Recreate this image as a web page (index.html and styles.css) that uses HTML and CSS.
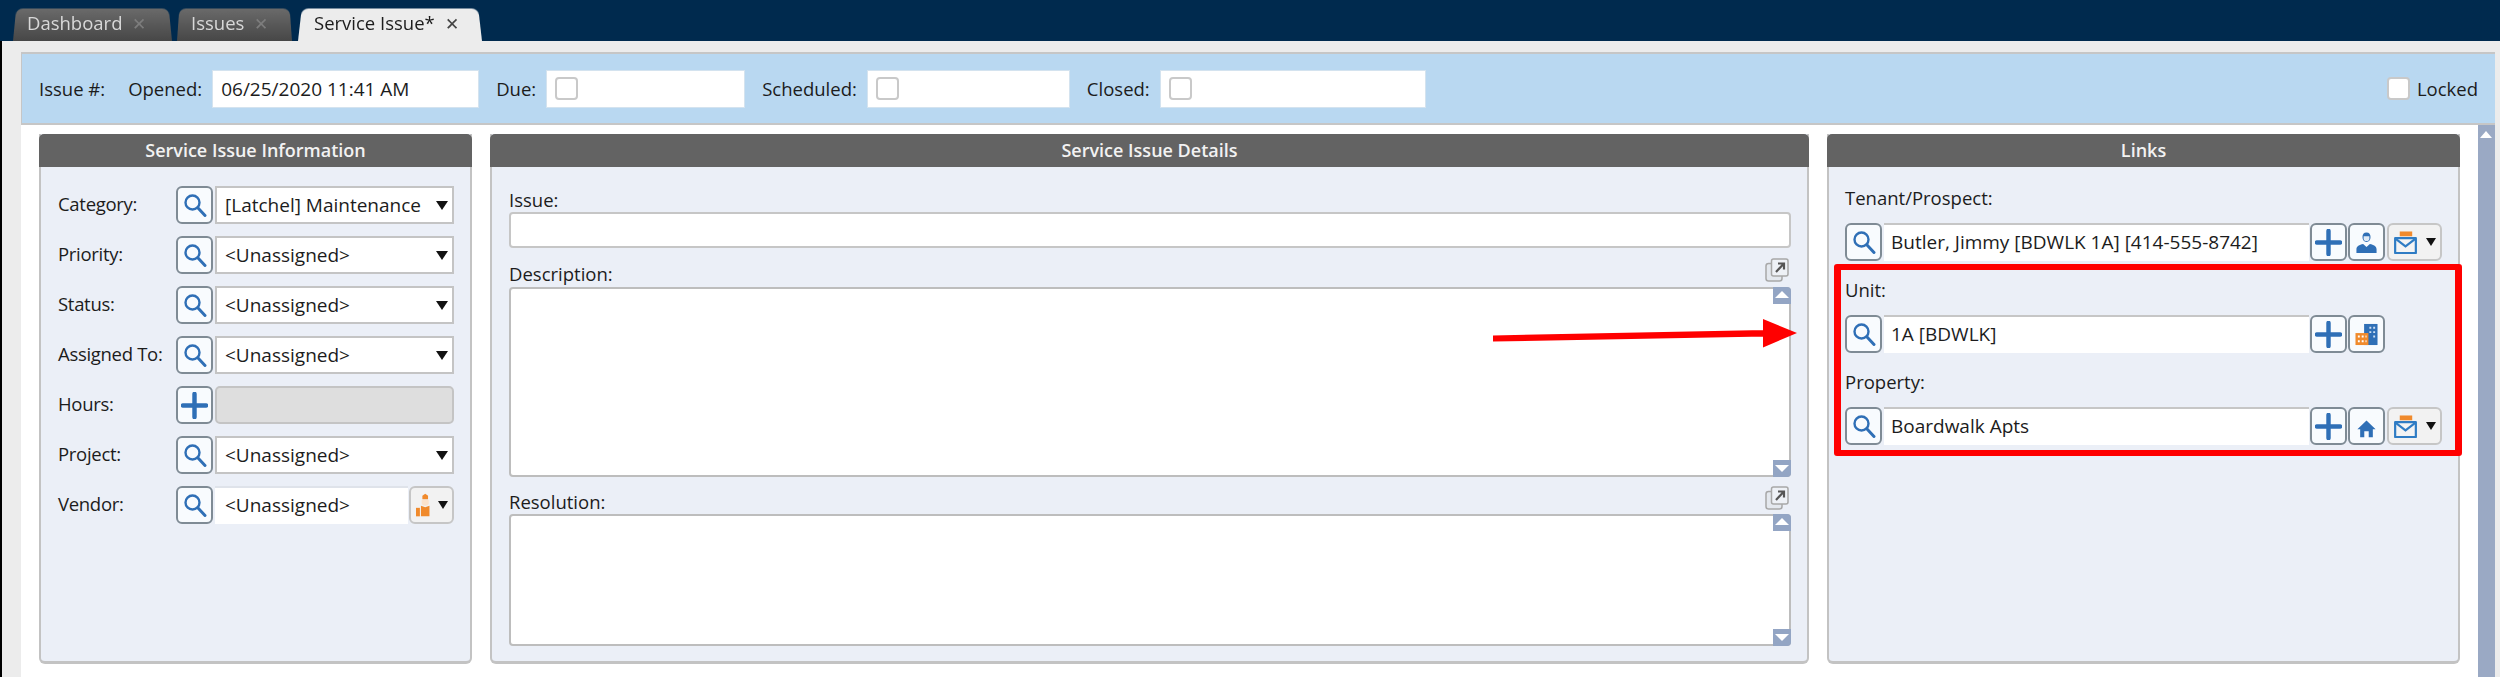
FILE: index.html
```html
<!DOCTYPE html>
<html lang="en">
<head>
    <meta charset="UTF-8">
    <title>Service Issue</title>
    <link rel="stylesheet" href="styles.css">
</head>
<body>
    <svg class="sprite" xmlns="http://www.w3.org/2000/svg">
        <symbol id="i-search" viewBox="0 0 24 24">
            <circle cx="9.5" cy="9.5" r="7" fill="none" stroke="#2f6fb6" stroke-width="2.4"/>
            <path d="M14.8 14.8 L22 22.5" fill="none" stroke="#2f6fb6" stroke-width="3" stroke-linecap="round"/>
        </symbol>
        <symbol id="i-plus" viewBox="0 0 28 28">
            <path d="M14 2 V26 M2 14 H26" fill="none" stroke="#2f6fb6" stroke-width="4.6" stroke-linecap="round"/>
        </symbol>
        <symbol id="i-person" viewBox="0 0 24 24">
            <path d="M12 1.5 c3 0 4.2 2.2 4.2 4.8 c0 2.8-1.4 5.2-4.2 5.2 s-4.2-2.4-4.2-5.2 c0-2.6 1.2-4.8 4.2-4.8 z" fill="#2f6fb6"/>
            <path d="M1.5 23 v-4 c0-3 3-4.600 7-5.400 l3.500 3 l3.500-3 c4 .8 7 2.400 7 5.400 v4 z" fill="#2f6fb6"/>
            <path d="M9 5.500 h6 v2.500 c0 1.500-1.300 2.500-3 2.500 s-3-1-3-2.500 z" fill="#dfeaf6"/>
        </symbol>
        <symbol id="i-mail" viewBox="0 0 24 24">
            <path d="M6 0.500 h13 v5 h-13 z" fill="#f08a2c"/>
            <path d="M1.200 7.500 H22.800 V23 H1.200 z" fill="#f4f4f4" stroke="#2f7cc4" stroke-width="2.300" stroke-linejoin="round"/>
            <path d="M1.500 8 L12 16 L22.500 8" fill="none" stroke="#2f7cc4" stroke-width="2.300"/>
        </symbol>
        <symbol id="i-building" viewBox="0 0 24 24">
            <path d="M9.500 1 H23.500 V23 H9.500 z" fill="#2f6fb6"/>
            <path d="M0.500 10.500 H14 V23 H0.500 z" fill="#f08a2c"/>
            <path d="M3 13 h2 v2 h-2 z M7 13 h2 v2 h-2 z M3 18 h2 v2 h-2 z M7 18 h2 v2 h-2 z M11 13 h1 v2 h-1 z M11 18 h1 v2 h-1 z" fill="#fff"/>
            <path d="M15 4 h2 v2 h-2 z M19 4 h2 v2 h-2 z M15 8.500 h2 v2 h-2 z M19 8.500 h2 v2 h-2 z M19 13 h2 v2 h-2 z" fill="#cfe0f2"/>
        </symbol>
        <symbol id="i-home" viewBox="0 0 24 24">
            <path d="M12 2 L23.500 13 H20 V23 H14.800 V15.500 H9.200 V23 H4 V13 H0.500 z" fill="#2f6fb6"/>
        </symbol>
        <symbol id="i-worker" viewBox="0 0 24 32">
            <path d="M13 0 l4 3 v5 h-8 v-5 z" fill="#f08a2c"/>
            <path d="M8 9 h10 v5 c0 2-2 3-5 3 s-5-1-5-3 z" fill="#fbe3cd"/>
            <path d="M7 17 l6 2 l6-2 v15 h-12 z" fill="#f08a2c"/>
            <path d="M0 20 h5.500 v12 h-5.500 z" fill="#f08a2c"/>
        </symbol>
        <symbol id="i-popout" viewBox="0 0 24 24">
            <rect x="1" y="5.500" width="16" height="17.500" rx="2.500" fill="#e4e8ee" stroke="#a8a8a8" stroke-width="1.500"/>
            <rect x="6.500" y="1" width="16.500" height="17" rx="2" fill="#eef1f6" stroke="#a8a8a8" stroke-width="1.500"/>
            <path d="M11 14 L18 6.500 M13 5.500 H19 V11.500" fill="none" stroke="#555" stroke-width="2.200"/>
        </symbol>
    </svg>

    <div class="tabbar">
        <div class="tab">Dashboard <span class="tab-x">&#10005;</span></div>
        <div class="tab tab-issues">Issues <span class="tab-x">&#10005;</span></div>
        <div class="tab tab-active">Service Issue* <span class="tab-x">&#10005;</span></div>
    </div>

    <div class="content">
        <div class="page">
            <div class="issuebar">
                <span class="bar-label issue-no">Issue #:</span>
                <span class="bar-label">Opened:</span>
                <div class="bar-input w-opened">06/25/2020 11:41 AM</div>
                <span class="bar-label">Due:</span>
                <div class="bar-input w-due"><span class="check"></span></div>
                <span class="bar-label">Scheduled:</span>
                <div class="bar-input w-sched"><span class="check"></span></div>
                <span class="bar-label">Closed:</span>
                <div class="bar-input w-closed"><span class="check"></span></div>
                <div class="locked"><span class="check"></span> Locked</div>
            </div>

            <div class="main">
                <div class="panels">
                    <section class="panel panel-info">
                        <h2 class="panel-head">Service Issue Information</h2>
                        <div class="info-rows">
                            <div class="info-row">
                                <span class="info-label">Category:</span>
                                <button class="btn"><svg class="ic-search"><use href="#i-search"/></svg></button>
                                <div class="select">[Latchel] Maintenance<i class="caret"></i></div>
                            </div>
                            <div class="info-row">
                                <span class="info-label">Priority:</span>
                                <button class="btn"><svg class="ic-search"><use href="#i-search"/></svg></button>
                                <div class="select">&lt;Unassigned&gt;<i class="caret"></i></div>
                            </div>
                            <div class="info-row">
                                <span class="info-label">Status:</span>
                                <button class="btn"><svg class="ic-search"><use href="#i-search"/></svg></button>
                                <div class="select">&lt;Unassigned&gt;<i class="caret"></i></div>
                            </div>
                            <div class="info-row">
                                <span class="info-label">Assigned To:</span>
                                <button class="btn"><svg class="ic-search"><use href="#i-search"/></svg></button>
                                <div class="select">&lt;Unassigned&gt;<i class="caret"></i></div>
                            </div>
                            <div class="info-row">
                                <span class="info-label">Hours:</span>
                                <button class="btn"><svg class="ic-plus"><use href="#i-plus"/></svg></button>
                                <div class="select select-off"></div>
                            </div>
                            <div class="info-row">
                                <span class="info-label">Project:</span>
                                <button class="btn"><svg class="ic-search"><use href="#i-search"/></svg></button>
                                <div class="select">&lt;Unassigned&gt;<i class="caret"></i></div>
                            </div>
                            <div class="info-row">
                                <span class="info-label">Vendor:</span>
                                <button class="btn"><svg class="ic-search"><use href="#i-search"/></svg></button>
                                <div class="select select-vendor">&lt;Unassigned&gt;</div>
                                <button class="btn btn-menu btn-vendor"><svg class="ic-worker"><use href="#i-worker"/></svg><i class="caret caret-small"></i></button>
                            </div>
                        </div>
                    </section>

                    <section class="panel panel-details">
                        <h2 class="panel-head">Service Issue Details</h2>
                        <div class="details">
                            <label class="field-label">Issue:</label>
                            <div class="text-input"></div>
                            <div class="note-head note-desc">
                                <label class="field-label">Description:</label>
                                <svg class="ic-popout"><use href="#i-popout"/></svg>
                            </div>
                            <div class="textarea ta-desc"><span class="sb-up"></span><span class="sb-down"></span></div>
                            <div class="note-head note-res">
                                <label class="field-label">Resolution:</label>
                                <svg class="ic-popout"><use href="#i-popout"/></svg>
                            </div>
                            <div class="textarea ta-res"><span class="sb-up"></span><span class="sb-down"></span></div>
                        </div>
                    </section>

                    <section class="panel panel-links">
                        <h2 class="panel-head">Links</h2>
                        <div class="links">
                            <div class="link-group">
                                <label class="field-label">Tenant/Prospect:</label>
                                <div class="link-row">
                                    <button class="btn"><svg class="ic-search"><use href="#i-search"/></svg></button>
                                    <div class="link-input">Butler, Jimmy [BDWLK 1A] [414-555-8742]</div>
                                    <button class="btn"><svg class="ic-plus"><use href="#i-plus"/></svg></button>
                                    <button class="btn"><svg class="ic-small"><use href="#i-person"/></svg></button>
                                    <button class="btn btn-menu"><svg class="ic-small"><use href="#i-mail"/></svg><i class="caret caret-small"></i></button>
                                </div>
                            </div>
                            <div class="link-group">
                                <label class="field-label">Unit:</label>
                                <div class="link-row">
                                    <button class="btn"><svg class="ic-search"><use href="#i-search"/></svg></button>
                                    <div class="link-input">1A [BDWLK]</div>
                                    <button class="btn"><svg class="ic-plus"><use href="#i-plus"/></svg></button>
                                    <button class="btn"><svg class="ic-small"><use href="#i-building"/></svg></button>
                                </div>
                            </div>
                            <div class="link-group">
                                <label class="field-label">Property:</label>
                                <div class="link-row">
                                    <button class="btn"><svg class="ic-search"><use href="#i-search"/></svg></button>
                                    <div class="link-input">Boardwalk Apts</div>
                                    <button class="btn"><svg class="ic-plus"><use href="#i-plus"/></svg></button>
                                    <button class="btn"><svg class="ic-home"><use href="#i-home"/></svg></button>
                                    <button class="btn btn-menu"><svg class="ic-small"><use href="#i-mail"/></svg><i class="caret caret-small"></i></button>
                                </div>
                            </div>
                        </div>
                        <div class="callout"></div>
                    </section>
                </div>
                <div class="page-scroll"><span class="page-scroll-up"></span></div>
            </div>
        </div>
    </div>

    <!-- red annotation arrow drawn on top of the screenshot -->
    <svg class="arrow" viewBox="0 0 306 30" xmlns="http://www.w3.org/2000/svg">
        <path d="M0 17.500 L272 12 V18.500 L0 23.500 z M270 1 L304 15 L270 29.500 z" fill="#f00"/>
    </svg>
</body>
</html>
```

FILE: styles.css
```css
* {
    box-sizing: border-box;
}
html, body {
    margin: 0;
    height: 677px;
    overflow: hidden;
}
body {
    position: relative;
    background-color: #000;
    padding-left: 2px;
    font-family: "Open Sans", "Noto Sans", sans-serif;
    font-size: 18.5px;
    color: #1c1c1c;
    display: flex;
    flex-direction: column;
}
.sprite {
    display: none;
}

/* tabs */
.tabbar {
    height: 41px;
    background-color: #002a4e;
    padding: 7px 0 0 13px;
    display: flex;
    margin-left: -2px;
    flex-shrink: 0;
}
.tab {
    position: relative;
    z-index: 0;
    width: 159px;
    padding-left: 14px;
    line-height: 32px;
    color: #d8d8d8;
    margin-right: 5px;
    white-space: nowrap;
}
.tab::before {
    content: "";
    position: absolute;
    inset: 0;
    z-index: -1;
    border-radius: 7px 7px 0 0;
    background: linear-gradient(#6a6a6a, #474747);
    transform: perspective(70px) rotateX(5deg);
    transform-origin: bottom;
}
.tab-issues {
    width: 115px;
    margin-right: 6px;
    padding-left: 14px;
}
.tab-active {
    width: 184px;
    padding-left: 16px;
    color: #1c1c1c;
}
.tab-active::before {
    background: #ececec;
}
.tab-x {
    font-size: 17px;
    margin-left: 5px;
    color: #7d7d7d;
}
.tab-active .tab-x {
    color: #444;
}

.content {
    flex: 1;
    background-color: #ececec;
    padding: 11px 5px 0 19px;
    min-height: 0;
}
.page {
    height: 100%;
    background-color: #fff;
    display: flex;
    flex-direction: column;
}

/* blue band on top */
.issuebar {
    height: 73px;
    background-color: #b9d8f1;
    border: 2px solid #c6c6c6;
    border-width: 2px 0 2px 1px;
    display: flex;
    align-items: center;
    padding-left: 17px;
    flex-shrink: 0;
}
.bar-label {
    white-space: nowrap;
}
.issue-no {
    margin-right: 23px;
}
.bar-input {
    height: 38px;
    background-color: #fff;
    border: 1px solid #d4e3ef;
    margin: 0 17px 0 10px;
    padding-left: 8px;
    display: flex;
    align-items: center;
    white-space: nowrap;
    font-size: 19px;
}
.w-opened {
    width: 267px;
}
.w-due {
    width: 199px;
}
.w-sched {
    width: 203px;
}
.w-closed {
    width: 266px;
}
.check {
    display: inline-block;
    width: 23px;
    height: 23px;
    background-color: #fff;
    border: 2px solid #c9c9c9;
    border-radius: 4px;
}
.locked {
    margin-left: auto;
    margin-right: 17px;
    display: flex;
    align-items: center;
    gap: 7px;
}

/* panels */
.main {
    flex: 1;
    display: flex;
    min-height: 0;
}
.panels {
    flex: 1;
    display: flex;
    gap: 18px;
    padding: 9px 18px 13px 18px;
}
.panel {
    position: relative;
    display: flex;
    flex-direction: column;
    background-color: #ebeff7;
    border: 2px solid #c3c3c3;
    border-top: 0;
    border-bottom-width: 3px;
    border-radius: 0 0 6px 6px;
}
.panel-info {
    width: 433px;
}
.panel-details {
    width: 1319px;
}
.panel-links {
    width: 633px;
}
.panel-head {
    margin: 0 -2px;
    height: 33px;
    line-height: 33px;
    background-color: #636363;
    border-radius: 5px 5px 0 0;
    color: #f2f2f2;
    font-size: 18px;
    font-weight: 600;
    text-align: center;
}

.info-rows {
    padding: 19px 16px 0 17px;
    display: flex;
    flex-direction: column;
    gap: 12px;
}
.info-row {
    display: flex;
    align-items: center;
    height: 38px;
}
.info-label {
    width: 118px;
    padding-bottom: 3px;
    white-space: nowrap;
    letter-spacing: -0.3px;
}
.btn {
    width: 37px;
    height: 38px;
    flex-shrink: 0;
    padding: 0;
    background-color: #f8fbfe;
    border: 2px solid #7f8b95;
    border-radius: 6px;
    display: flex;
    align-items: center;
    justify-content: center;
}
.btn-menu {
    width: 55px;
    margin-left: 2px;
    background-color: #f2f2f2;
    border-color: #c6c6c6;
    gap: 9px;
}
.btn-vendor {
    width: 45px;
    margin-left: 1px;
    gap: 5px;
}
.ic-search {
    width: 24px;
    height: 24px;
}
.ic-plus {
    width: 27px;
    height: 27px;
}
.ic-small {
    width: 23px;
    height: 23px;
}
.ic-home {
    width: 19px;
    height: 19px;
    margin-top: 4px;
}
.ic-worker {
    width: 17px;
    height: 24px;
}
.select {
    flex: 1;
    height: 38px;
    margin-left: 2px;
    padding-left: 8px;
    background-color: #fff;
    border: 2px solid #c4c4c4;
    display: flex;
    align-items: center;
    justify-content: space-between;
    white-space: nowrap;
    font-size: 19px;
}
.select-off {
    background-color: #dedede;
    border-radius: 5px;
}
.select-vendor {
    border: 0;
    border-top: 2px solid #dfe3ea;
    padding: 0 0 3px 10px;
}
.caret {
    width: 0;
    height: 0;
    margin-right: 4px;
    border-style: solid;
    border-width: 9px 6px 0;
    border-color: #111 transparent transparent;
}
.caret-small {
    margin-right: 0;
    border-width: 8px 5px 0;
}

/* middle panel */
.details {
    padding: 22px 16px 0 17px;
    display: flex;
    flex-direction: column;
}
.field-label {
    display: block;
    line-height: 22px;
    white-space: nowrap;
}
.text-input {
    height: 36px;
    margin-top: 1px;
    background-color: #fff;
    border: 2px solid #c6c6c6;
    border-radius: 4px;
}
.note-head {
    height: 27px;
    display: flex;
    align-items: flex-end;
    justify-content: space-between;
}
.note-desc {
    margin-top: 10px;
}
.note-res {
    margin-top: 9px;
}
.ic-popout {
    width: 24px;
    height: 24px;
    margin: 0 2px 3px 0;
}
.textarea {
    position: relative;
    background-color: #fff;
    border: 2px solid #bdbdbd;
    border-radius: 4px;
}
.ta-desc {
    height: 190px;
    margin-top: 2px;
}
.ta-res {
    height: 132px;
    margin-top: 1px;
}
.sb-up, .sb-down {
    position: absolute;
    right: -2px;
    width: 18px;
    height: 17px;
    background-color: #93a5c4;
}
.sb-up {
    top: -2px;
    border-radius: 0 4px 0 0;
}
.sb-down {
    bottom: -2px;
    border-radius: 0 0 4px 0;
}
.sb-up::after, .sb-down::after {
    content: "";
    position: absolute;
    left: 2px;
    width: 0;
    border-style: solid;
    border-color: #fff transparent;
}
.sb-up::after {
    top: 4px;
    border-width: 0 7px 7px;
}
.sb-down::after {
    top: 5px;
    border-width: 7px 7px 0;
}

/* links panel */
.links {
    padding: 20px 16px 0 16px;
}
.link-group {
    height: 92px;
    display: flex;
    flex-direction: column;
    gap: 14px;
}
.link-row {
    display: flex;
    height: 38px;
}
.link-input {
    width: 425px;
    margin: 0 1px 0 2px;
    padding: 0 0 3px 7px;
    background-color: #fff;
    border-top: 2px solid #c6c6c6;
    display: flex;
    align-items: center;
    white-space: nowrap;
    font-size: 19px;
}
.link-row .link-input + .btn + .btn {
    margin-left: 1px;
}
.callout {
    position: absolute;
    left: 5px;
    top: 130px;
    width: 628px;
    height: 192px;
    border: 6px solid #f00;
    border-left-width: 7px;
    border-right-width: 7px;
    border-radius: 3px;
}
.page-scroll {
    position: relative;
    width: 17px;
    background-color: #9aa9c4;
}
.page-scroll-up {
    position: absolute;
    top: 6px;
    left: 2px;
    width: 0;
    border-style: solid;
    border-width: 0 6.500px 7px;
    border-color: transparent transparent #fff;
}
.arrow {
    position: absolute;
    left: 1493px;
    top: 318px;
    width: 306px;
    height: 30px;
}
```
